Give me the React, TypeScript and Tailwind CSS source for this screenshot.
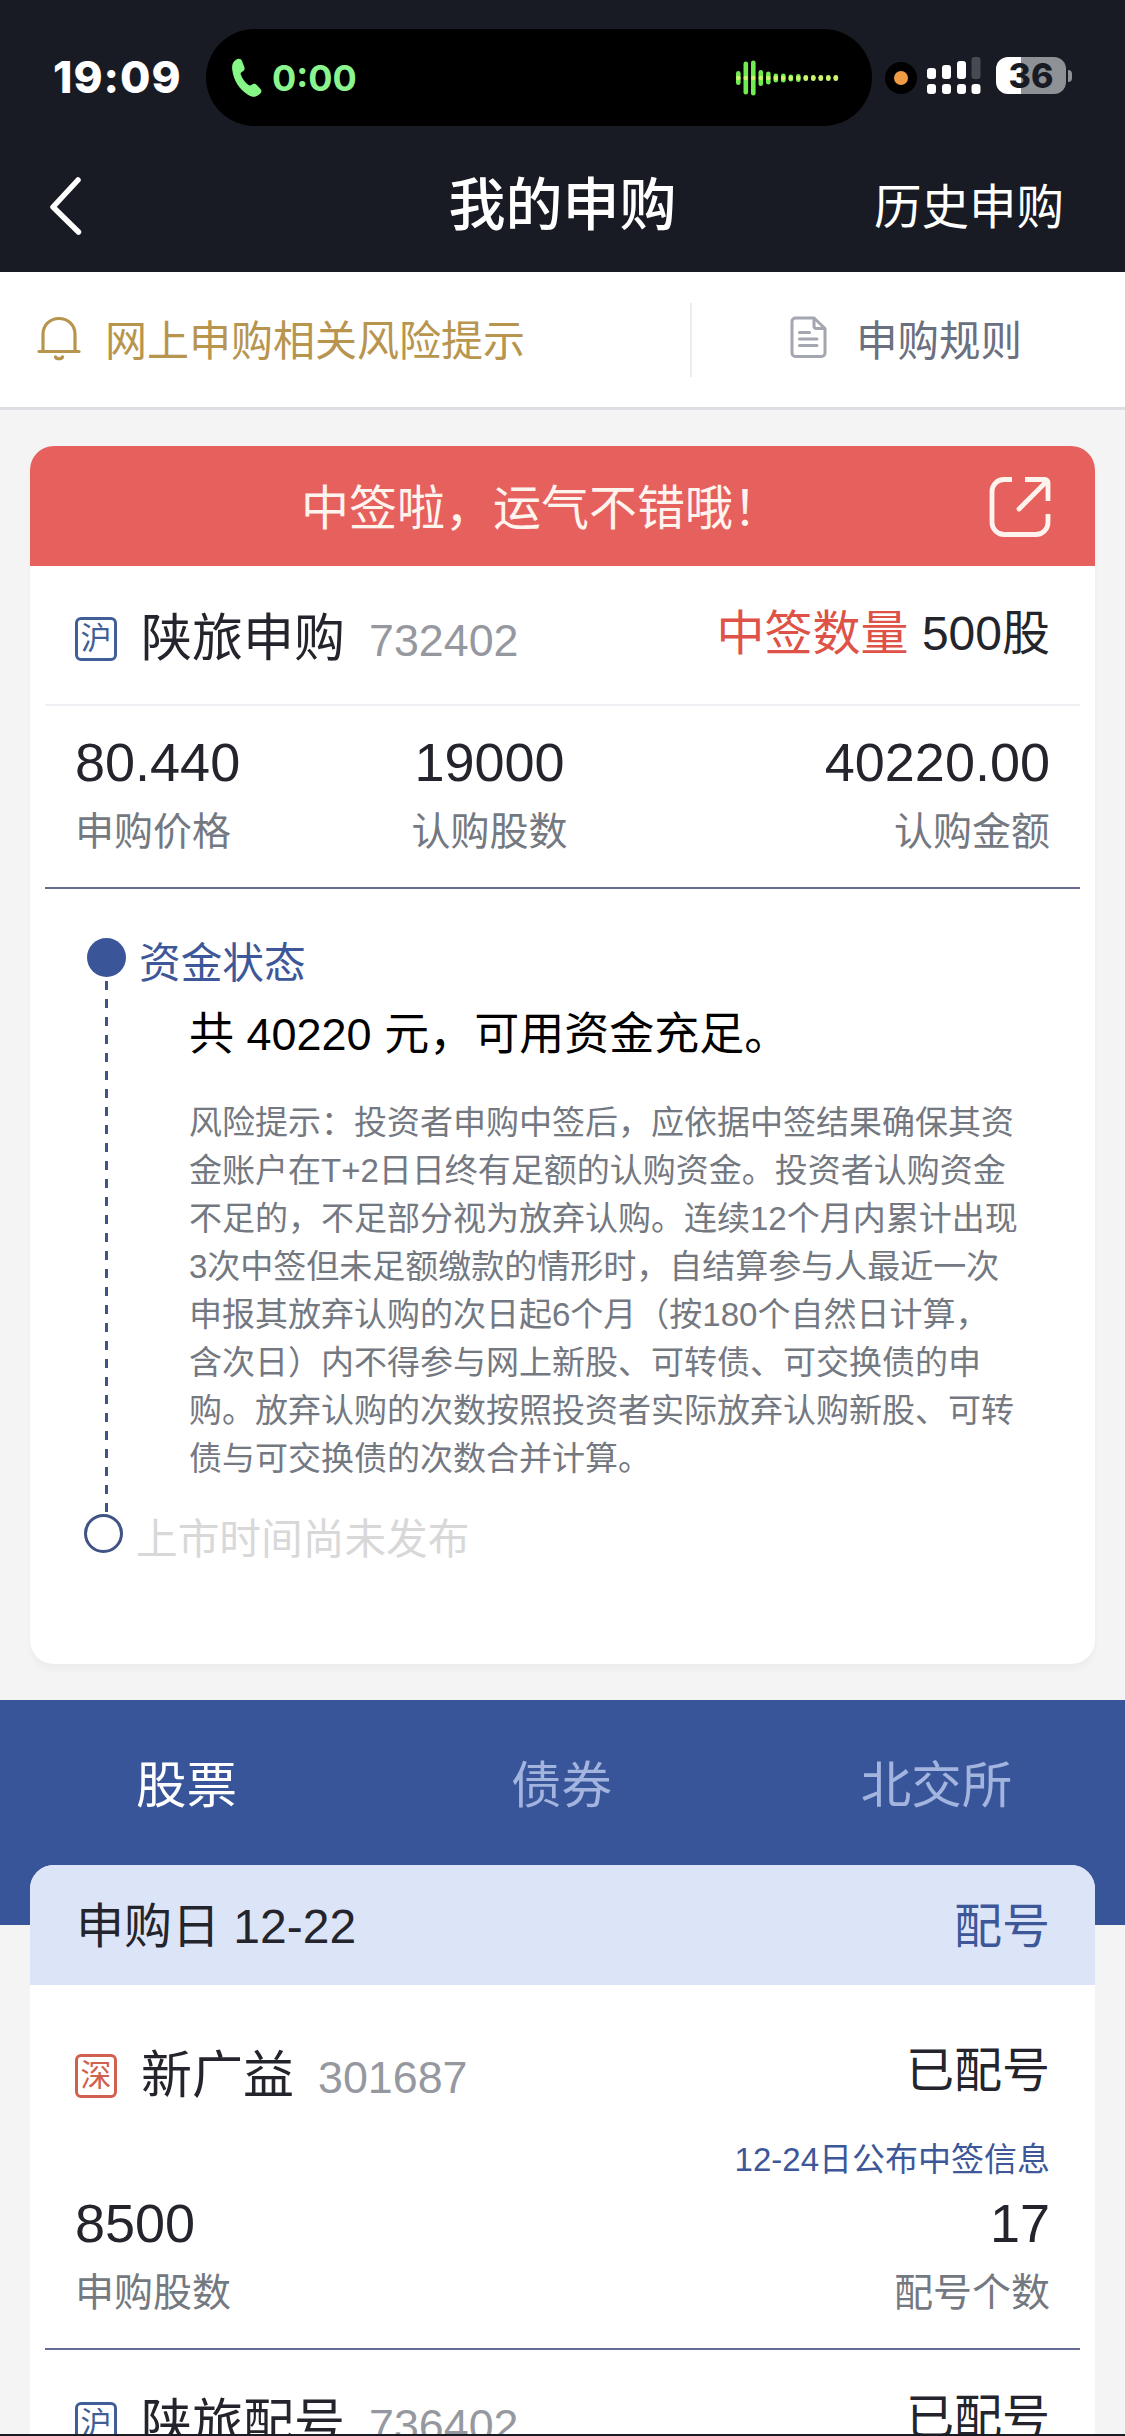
import React from 'react';

interface Metric {
  value: string;
  label: string;
}

const riskLines = [
  '风险提示：投资者申购中签后，应依据中签结果确保其资',
  '金账户在T+2日日终有足额的认购资金。投资者认购资金',
  '不足的，不足部分视为放弃认购。连续12个月内累计出现',
  '3次中签但未足额缴款的情形时，自结算参与人最近一次',
  '申报其放弃认购的次日起6个月（按180个自然日计算，',
  '含次日）内不得参与网上新股、可转债、可交换债的申',
  '购。放弃认购的次数按照投资者实际放弃认购新股、可转',
  '债与可交换债的次数合并计算。'
];

const tabs = [
  { id: 'stock', label: '股票' },
  { id: 'bond', label: '债券' },
  { id: 'bse', label: '北交所' }
];

const waveHeights = [14, 33, 35, 16, 13, 9, 9, 7, 8, 6, 6, 6, 6, 6];

function StatusBar() {
  return (
    <div className="h-[140px] flex items-start font-['Inter',sans-serif]">
      <div className="w-[206px] pl-[53px] pt-[51px] text-[44px] leading-[52px] font-extrabold text-white tracking-[1px]">19:09</div>
      <div className="mt-[29px] w-[666px] h-[97px] rounded-full bg-black flex items-center pl-[25px] pr-[33px]">
        <svg className="w-[31px] h-[40px]" viewBox="0 0 31 40" fill="#86f686">
          <path d="M5 1.800C7.500.2 10 .6 11 3l2.300 6c.7 1.800.2 3.200-1.300 4.200l-1.800 1.300c-.6.500-.7 1.200-.4 2 1.700 4.400 4.300 7.900 7.700 10.500.8.600 1.500.600 2.300.2l1.800-1c1.500-.8 3-.500 4.200.8l3.700 4c1.300 1.500 1.200 3.200-.2 4.600-3.300 3.500-7.500 4.300-12 1.400C8.500 31.700 2.500 22.500 1.200 11.500.7 7 1.800 3.700 5 1.800z" />
        </svg>
        <span className="ml-[10px] text-[36px] leading-[44px] font-bold text-[#8af58f]">0:00</span>
        <svg className="ml-auto w-[103px] h-[38px]" viewBox="0 0 103 38">
          {waveHeights.map((h, i) => (
            <g key={i}>
              <rect x={i * 7.5} y={19 - h / 2} width="4.600" height={h} rx="2.300" fill={i < 9 ? '#72ea51' : '#c8f56a'} />
              <circle cx={i * 7.5 + 2.3} cy="19" r="2.300" fill="#cdf56a" />
            </g>
          ))}
        </svg>
      </div>
      <div className="ml-[13px] mt-[62px] size-8 rounded-full bg-black flex items-center justify-center">
        <div className="size-[14px] rounded-full bg-[#ef9a44]" />
      </div>
      <svg className="ml-[10px] mt-[56px] w-[55px] h-[40px]" viewBox="0 0 55 40" fill="#fff">
        <rect x="0" y="12" width="9" height="11" rx="3" />
        <rect x="15" y="9" width="9" height="14" rx="3" />
        <rect x="30" y="5" width="9" height="18" rx="3" />
        <rect x="44.500" y="1" width="9" height="22" rx="3" fill="#484a52" />
        <rect x="0" y="28" width="9" height="10" rx="3" />
        <rect x="15" y="28" width="9" height="10" rx="3" />
        <rect x="30" y="28" width="9" height="10" rx="3" />
        <rect x="44.500" y="28" width="9" height="10" rx="3" />
      </svg>
      <div className="ml-[14px] mt-[57px] flex items-center">
        <div className="w-[70px] h-[37px] rounded-[12px] bg-[linear-gradient(to_right,#fff_36%,#8e9195_36%)] text-center text-[34px] leading-[37px] font-extrabold text-[#181b23]">
          36
        </div>
        <div className="ml-[2px] w-1 h-3 rounded-r-full bg-[#8e9195]" />
      </div>
    </div>
  );
}

function NavBar() {
  return (
    <div className="h-[132px] grid grid-cols-3 items-center px-[50px] text-white">
      <svg className="w-[32px] h-[60px]" viewBox="0 0 32 60" fill="none" stroke="#fff" strokeWidth="5.500" strokeLinecap="round" strokeLinejoin="round">
        <path d="M28 4 3 31l25.500 25" />
      </svg>
      <h1 className="text-center text-[57px] leading-[72px] font-medium whitespace-nowrap -mt-[2px]">我的申购</h1>
      <span className="text-right text-[47.500px] leading-[60px] pt-[4px] pr-[11px]">历史申购</span>
    </div>
  );
}

function NoticeBar() {
  return (
    <div className="h-[138px] bg-white border-b-[3px] border-[#dddee3] flex items-center text-[42px] leading-[60px]">
      <svg className="ml-[36px] w-[46px] h-[46px] -mt-[2px]" viewBox="0 0 46 46" fill="none" stroke="#b8954f" strokeWidth="3.200" strokeLinejoin="round" strokeLinecap="round">
        <path d="M7 35V18C7 9 14 2.500 23 2.500S39 9 39 18v17" />
        <path d="M3 35.500h40" />
        <path d="M19.500 41c1 2.300 6 2.300 7 0" />
      </svg>
      <span className="ml-[23px] pt-[5px] text-[#b8954f]">网上申购相关风险提示</span>
      <div className="ml-auto w-[2px] h-[74px] bg-[#ebecee]" />
      <div className="w-[433px] flex items-center pl-[98px]">
        <svg className="w-[37px] h-[42px] -mt-[5px]" viewBox="0 0 37 42" fill="none" stroke="#a4a6b0" strokeWidth="3" strokeLinejoin="round" strokeLinecap="round">
          <path d="M5.500 2H24l11 10.500V37a3.500 3.500 0 0 1-3.500 3.500h-26A3.500 3.500 0 0 1 2 37V5.500A3.500 3.500 0 0 1 5.500 2z" />
          <path d="M24 2.500v7.500a2.500 2.500 0 0 0 2.500 2.500H34M9.500 16.500h10M9.500 23h17.500M9.500 29.500h17.500" />
        </svg>
        <span className="ml-[29px] pt-[5px] text-[41.500px] text-[#6b7080]">申购规则</span>
      </div>
    </div>
  );
}

function MarketBadge({ market }: { market: '沪' | '深' }) {
  return (
    <span
      className={`
        w-[42px] h-[44px] rounded-[6px] border-[3px] flex items-center justify-center text-[31px] leading-[38px]
        ${market === '沪' ? 'border-[#3f5f96] text-[#3f5f96]' : 'border-[#d0604f] text-[#d0604f]'}
      `}
    >
      {market}
    </span>
  );
}

function StockName({ market, name, code }: { market: '沪' | '深'; name: string; code: string }) {
  return (
    <div className="flex items-center">
      <MarketBadge market={market} />
      <span className="ml-[24px] text-[51px] leading-[60px] text-[#23242c]">{name}</span>
      <span className="ml-[24px] mt-[3px] text-[44.800px] leading-[60px] text-[#9698a0]">{code}</span>
    </div>
  );
}

function MetricCell({ value, label, className }: Metric & { className?: string }) {
  return (
    <div className={className}>
      <div className="text-[54px] leading-[66px] text-[#23242c]">{value}</div>
      <div className="mt-[7px] text-[39px] leading-[60px] text-[#747881]">{label}</div>
    </div>
  );
}

function WinningCard() {
  return (
    <section className="mx-[30px] mt-[36px] h-[1218px] rounded-[24px] bg-white shadow-[0_6px_6px_rgba(0,0,0,0.03)] overflow-hidden">
      <div className="h-[120px] bg-[#e6615d] flex items-center pl-[271px] pr-[44px] text-[#fff3ee]">
        <span className="pt-[5px] text-[48px] leading-[60px]">中签啦，运气不错哦！</span>
        <svg className="ml-auto mt-[2px] w-[62px] h-[62px]" viewBox="0 0 62 62" fill="none" stroke="#fff3ee" strokeWidth="4.800" strokeLinejoin="round">
          <path d="M23 3.500h-8A12 12 0 0 0 3 15.500v31a12 12 0 0 0 12 12h32a12 12 0 0 0 12-12V38" />
          <path d="M36 3.500h20a3 3 0 0 1 3 3V25" />
          <path d="M58 5 30 33" strokeLinecap="round" />
        </svg>
      </div>

      <div className="px-[15px]">
        <div className="h-[140px] pl-[30px] pr-[30px] flex items-center justify-between border-b-2 border-[#f0f0f4]">
          <div className="mt-[7px]">
            <StockName market="沪" name="陕旅申购" code="732402" />
          </div>
          <div className="-mt-[2px] text-[48px] leading-[60px] text-[#23242c]">
            <span className="text-[#de5248]">中签数量</span> 500股
          </div>
        </div>

        <div className="h-[183px] pl-[30px] pr-[30px] pt-[23px] flex border-b-2 border-[#666b96]">
          <MetricCell value="80.440" label="申购价格" className="w-[250px]" />
          <MetricCell value="19000" label="认购股数" className="w-[329px] text-center" />
          <MetricCell value="40220.00" label="认购金额" className="flex-1 text-right" />
        </div>
      </div>

      <div className="pt-[43px] flex">
        <div className="w-[109px] pl-[54px] pt-[6px] flex flex-col items-start">
          <div className="ml-[3px] size-[39px] rounded-full bg-[#3a5699]" />
          <div className="ml-[21px] mt-[4px] w-[3px] h-[533px] bg-[repeating-linear-gradient(to_bottom,#3f5483_0_9px,transparent_9px_18px)]" />
          <div className="size-[39px] rounded-full border-[3px] border-[#3f5483]" />
        </div>
        <div>
          <div className="pt-[2px] text-[41.700px] leading-[60px] text-[#3d5798]">资金状态</div>
          <div className="mt-[11px] ml-[50px] text-[45px] leading-[60px] text-black">共 40220 元，可用资金充足。</div>
          <div className="mt-[34px] ml-[50px] text-[33px] leading-[48px] text-[#747881] whitespace-nowrap">
            {riskLines.map(line => (
              <div key={line}>{line}</div>
            ))}
          </div>
          <div className="mt-[27px] -ml-[3px] text-[41.700px] leading-[60px] text-[#d8d8d9]">上市时间尚未发布</div>
        </div>
      </div>
    </section>
  );
}

function TabBar() {
  return (
    <div className="mt-[36px] h-[225px] bg-[#385599] grid grid-cols-3 items-start pt-[56px]">
      {tabs.map(tab => (
        <button
          key={tab.id}
          type="button"
          className={`text-[50.500px] leading-[60px] text-center pr-[2px] ${tab.id === 'stock' ? 'text-white' : 'text-[#a3b4de]'}`}
        >
          {tab.label}
        </button>
      ))}
    </div>
  );
}

function AllotmentCard() {
  return (
    <section className="relative mx-[30px] -mt-[60px] h-[700px] rounded-t-[24px] bg-white overflow-hidden text-[48px] leading-[60px] text-[#23242c]">
      <div className="h-[120px] bg-[#dce5f7] flex items-center justify-between pt-[4px] pl-[46px] pr-[45px]">
        <span>申购日 12-22</span>
        <span className="text-[#3d5798]">配号</span>
      </div>

      <div className="mx-[15px] h-[365px] pl-[30px] pr-[30px] border-b-2 border-[#666b96]">
        <div className="pt-[56px] flex justify-between">
          <div className="mt-[3px]">
            <StockName market="深" name="新广益" code="301687" />
          </div>
          <span>已配号</span>
        </div>
        <div className="mt-[29px] text-right text-[33px] leading-[48px] text-[#3d5798]">12-24日公布中签信息</div>
        <div className="mt-[6px] flex justify-between">
          <MetricCell value="8500" label="申购股数" />
          <MetricCell value="17" label="配号个数" className="text-right" />
        </div>
      </div>

      <div className="mx-[15px] pl-[30px] pr-[30px] pt-[38px] flex justify-between">
        <div className="mt-[4px]">
          <StockName market="沪" name="陕旅配号" code="736402" />
        </div>
        <span>已配号</span>
      </div>
    </section>
  );
}

export default function App() {
  return (
    <div className="w-[1125px] h-[2436px] overflow-hidden bg-[#f4f4f4] border-b-2 border-[#181b23] font-['Liberation_Sans','Noto_Sans_CJK_SC',sans-serif]">
      <header className="bg-[#181b23]">
        <StatusBar />
        <NavBar />
      </header>
      <NoticeBar />
      <WinningCard />
      <TabBar />
      <AllotmentCard />
    </div>
  );
}
